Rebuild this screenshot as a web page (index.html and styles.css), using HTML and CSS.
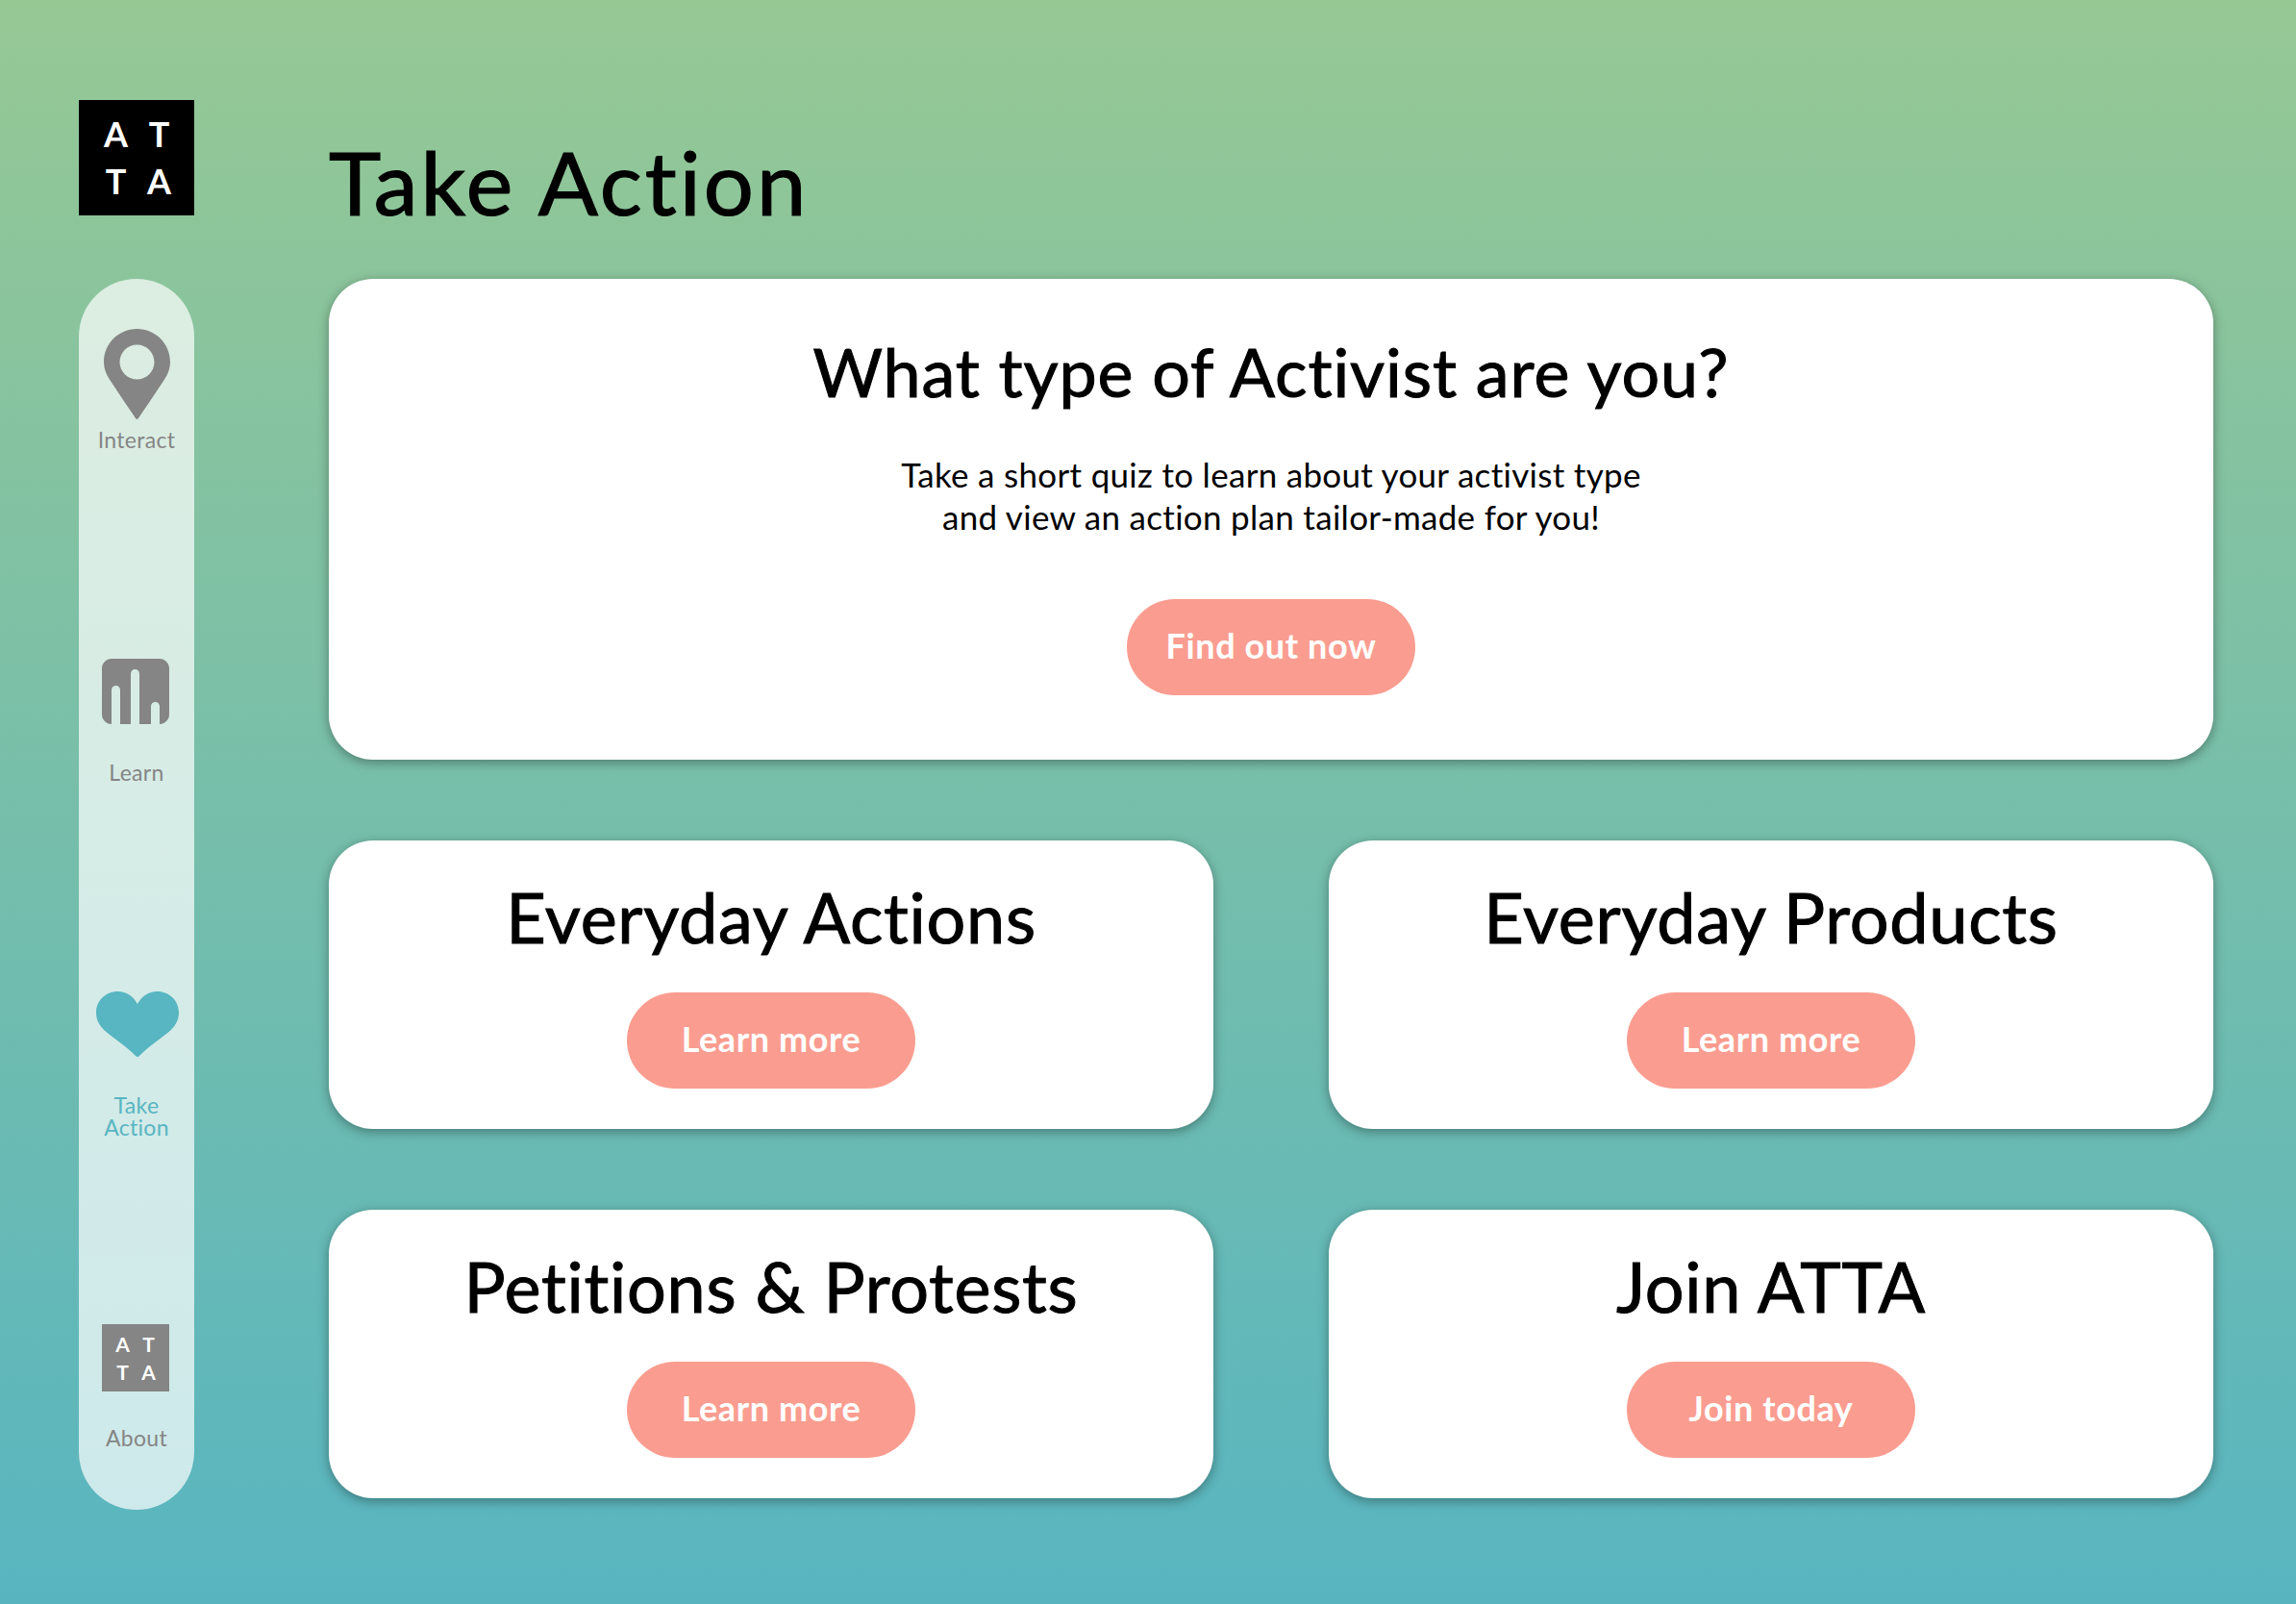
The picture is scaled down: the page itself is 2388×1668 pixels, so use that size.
FILE: index.html

```html
<!DOCTYPE html>
<html lang="en">
<head>
    <meta charset="UTF-8">
    <meta name="viewport" content="width=device-width, initial-scale=1.0">
    <title>Take Action</title>
    <link rel="stylesheet" href="styles.css">
</head>
<body>
    <aside class="sidebar">
        <div class="logo">
            <span>A</span><span>T</span><span>T</span><span>A</span>
        </div>
        <nav class="nav">
            <a class="nav-item nav-interact">
                <svg class="icon-pin" viewBox="0 0 69 94">
                    <path fill-rule="evenodd" d="M34.500 0C15.400 0 0 15.400 0 34.500C0 41 2.200 46.600 5.600 52C13 63.500 24 79.500 33 93C33.800 94.200 35.200 94.200 36 93C45 79.500 56 63.500 63.400 52C66.800 46.600 69 41 69 34.500C69 15.400 53.600 0 34.500 0ZM34.500 16.500C44.400 16.500 52.500 24.600 52.500 34.500C52.500 44.400 44.400 52.500 34.500 52.500C24.600 52.500 16.500 44.400 16.500 34.500C16.500 24.600 24.600 16.500 34.500 16.500Z"/>
                </svg>
                <span class="nav-label">Interact</span>
            </a>
            <a class="nav-item nav-learn">
                <svg class="icon-bars" viewBox="0 0 70 68">
                    <path fill-rule="evenodd" d="M10 0H60C65.500 0 70 4.500 70 10V58C70 63.500 65.500 68 60 68V49.500C60 47 58 45 55.500 45C53 45 51 47 51 49.500V68H39V15.500C39 13 37 11 34.500 11C32 11 30 13 30 15.500V68H19V32.500C19 30 17 28 14.500 28C12 28 10 30 10 32.500V68C4.500 68 0 63.500 0 58V10C0 4.500 4.500 0 10 0Z"/>
                </svg>
                <span class="nav-label">Learn</span>
            </a>
            <a class="nav-item nav-action active">
                <svg class="icon-heart" viewBox="0 0 86 68">
                    <path d="M43 13C38.500 5 31.500 0 22.500 0C10 0 0 9.500 0 22C0 31 4.500 37 11 42.500C19 49 31 57 41 67C42.200 68.200 43.800 68.200 45 67C55 57 67 49 75 42.500C81.500 37 86 31 86 22C86 9.500 76 0 63.500 0C54.500 0 47.500 5 43 13Z"/>
                </svg>
                <span class="nav-label">Take<br>Action</span>
            </a>
            <a class="nav-item nav-about">
                <div class="logo logo-small">
                    <span>A</span><span>T</span><span>T</span><span>A</span>
                </div>
                <span class="nav-label">About</span>
            </a>
        </nav>
    </aside>

    <main class="content">
        <h1>Take Action</h1>

        <section class="card card-hero">
            <h2>What type of Activist are you?</h2>
            <p>Take a short quiz to learn about your activist type<br>and view an action plan tailor-made for you!</p>
            <a class="btn">Find out now</a>
        </section>

        <div class="card-grid">
            <section class="card">
                <h2>Everyday Actions</h2>
                <a class="btn">Learn more</a>
            </section>
            <section class="card">
                <h2>Everyday Products</h2>
                <a class="btn">Learn more</a>
            </section>
            <section class="card">
                <h2>Petitions &amp; Protests</h2>
                <a class="btn">Learn more</a>
            </section>
            <section class="card">
                <h2>Join ATTA</h2>
                <a class="btn">Join today</a>
            </section>
        </div>
    </main>
</body>
</html>
```

FILE: styles.css

```css
* {
    box-sizing: border-box;
}
html, body {
    height: 100%;
}
body {
    margin: 0;
    padding: 104px 86px 0 82px;
    display: flex;
    gap: 140px;
    font-family: Lato, "Open Sans", sans-serif;
    font-variant-ligatures: none;
    color: #000;
    background: linear-gradient(180deg, #96c894 0%, #58b5c0 100%);
    overflow: hidden;
}

/* sidebar */
.sidebar {
    width: 120px;
    flex-shrink: 0;
}
.logo {
    width: 120px;
    height: 120px;
    padding-left: 2px;
    background-color: #000;
    color: #fff;
    display: grid;
    grid-template-columns: 45px 45px;
    grid-template-rows: 49px 49px;
    justify-content: center;
    align-content: center;
    font-size: 36px;
    font-weight: 700;
    line-height: 49px;
    text-align: center;
}
.logo-small {
    width: 70px;
    height: 70px;
    margin-right: 2px;
    padding-left: 0;
    background-color: #858585;
    grid-template-columns: 27px 27px;
    grid-template-rows: 29px 29px;
    font-size: 21px;
    line-height: 29px;
}
.nav {
    margin-top: 66px;
    height: 1280px;
    padding-top: 52px;
    border-radius: 60px;
    background-color: rgba(255,255,255,0.7);
    display: flex;
    flex-direction: column;
    align-items: center;
}
.nav-item {
    display: flex;
    flex-direction: column;
    align-items: center;
    color: #858585;
}
.nav-item svg {
    display: block;
    fill: currentColor;
}
.nav-label {
    font-size: 23px;
    line-height: 23px;
    letter-spacing: 0.3px;
    text-align: center;
}
.active {
    color: #58b5c2;
}
.icon-pin {
    width: 69px;
    height: 94px;
}
.icon-bars {
    width: 70px;
    height: 68px;
    margin-right: 2px;
}
.icon-heart {
    width: 86px;
    height: 68px;
    margin-left: 2px;
}
.nav-interact .nav-label {
    margin-top: 10px;
}
.nav-learn {
    margin-top: 216px;
}
.nav-learn .nav-label {
    margin-top: 39px;
}
.nav-action {
    margin-top: 216px;
}
.nav-action .nav-label {
    margin-top: 39px;
}
.nav-about {
    margin-top: 193px;
}
.nav-about .nav-label {
    margin-top: 37px;
}

/* main */
.content {
    flex: 1;
}
h1 {
    margin: 30px 0 0;
    height: 156px;
    font-size: 92px;
    font-weight: 400;
    line-height: 110px;
    letter-spacing: 3px;
    -webkit-text-stroke: 1.2px #000;
}
.card {
    height: 300px;
    padding-top: 24px;
    background-color: #fff;
    border-radius: 46px;
    box-shadow: 0 3px 12px rgba(0,0,0,0.35);
    display: flex;
    flex-direction: column;
    align-items: center;
    text-align: center;
}
.card h2 {
    margin: 0;
    font-size: 72px;
    font-weight: 400;
    line-height: 110px;
    letter-spacing: 0.7px;
    -webkit-text-stroke: 1px #000;
}
.card-hero {
    height: 500px;
    padding-top: 41px;
}
.card-hero h2 {
    font-size: 70px;
    letter-spacing: 0.9px;
}
.card-hero p {
    margin: 30px 0 0;
    font-size: 35px;
    line-height: 44px;
    letter-spacing: 0.3px;
}
.btn {
    width: 300px;
    height: 100px;
    margin-top: 24px;
    border-radius: 50px;
    background-color: #fa9d90;
    color: #fff;
    font-size: 36px;
    font-weight: 700;
    line-height: 97px;
    letter-spacing: 0.6px;
}
.card-hero .btn {
    margin-top: 64px;
}
.card-grid {
    margin-top: 84px;
    display: grid;
    grid-template-columns: 1fr 1fr;
    column-gap: 120px;
    row-gap: 84px;
}
```
